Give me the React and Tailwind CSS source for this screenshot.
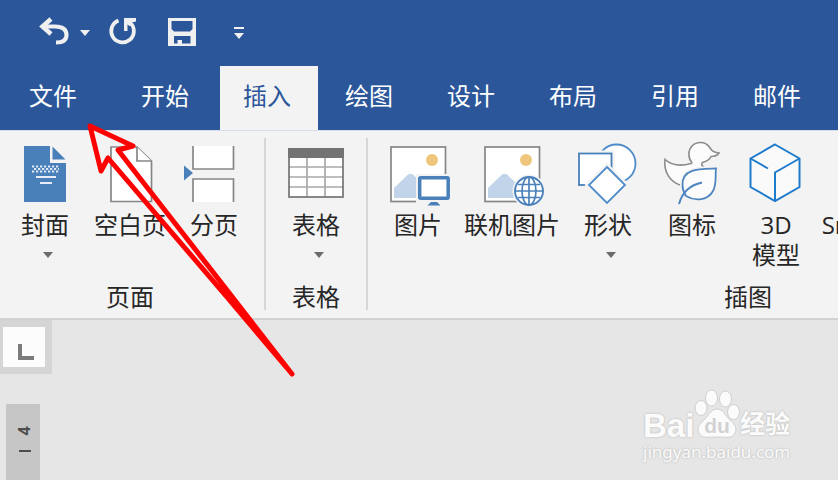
import { useState } from 'react'

const TABS = ['文件', '开始', '插入', '绘图', '设计', '布局', '引用', '邮件']

function Glyph({ children }) {
  return (
    <svg width="64" height="72" viewBox="0 0 64 72" fill="none" className="overflow-visible shrink-0" aria-hidden="true">
      {children}
    </svg>
  )
}

function CoverPageIcon() {
  return (
    <Glyph>
      <path d="M11 8H37V25H53V64H11Z" fill="#4a80ba" />
      <path d="M39.5 8.5L52.5 21.5H39.5Z" fill="#4a80ba" />
      <path d="M19 28.500H46M21 31H46M19 33.500H46" stroke="#dfe8f3" strokeWidth="2.200" strokeDasharray="2.200 1.800" />
      <path d="M23 39H43M27 45H39" stroke="#e6edf6" strokeWidth="2" />
    </Glyph>
  )
}

function BlankPageIcon() {
  return (
    <Glyph>
      <path d="M13 9H39L53.5 23V63.5H13Z" fill="#fff" stroke="#868686" strokeWidth="1.7" />
      <path d="M39 9V23H53.5" fill="#fff" stroke="#868686" strokeWidth="1.7" />
    </Glyph>
  )
}

function PageBreakIcon() {
  return (
    <Glyph>
      <path d="M11 8V31H51.5V8M11 64V41H51.5V64" fill="#fff" stroke="#868686" strokeWidth="1.7" />
      <path d="M2 27.5L11 35L2 42.5Z" fill="#4a80ba" />
    </Glyph>
  )
}

function TableIcon() {
  return (
    <Glyph>
      <rect x="5" y="11" width="54" height="48" fill="#fff" />
      <path d="M23 19V59M41 19V59M5 29H59M5 39H59M5 49H59" stroke="#a9a9a9" strokeWidth="1.7" />
      <rect x="5" y="11" width="54" height="48" stroke="#737373" strokeWidth="1.7" />
      <path d="M4 10H60V20H4Z" fill="#737373" />
    </Glyph>
  )
}

function PhotoFrame({ mountain }) {
  return (
    <>
      <rect x="5" y="9" width="54.5" height="54.5" fill="#fff" stroke="#868686" strokeWidth="1.7" />
      <circle cx="46" cy="22" r="6" fill="#eec67e" />
      <path d={mountain} fill="#c1d4e9" />
    </>
  )
}

function PictureIcon() {
  return (
    <Glyph>
      <PhotoFrame mountain="M8 50L22 36.500Q24.500 35 27 36.500L31 40.500V60H8Z" />
      <path d="M30 36H66V70H30Z" fill="#f3f3f3" />
      <rect x="33.700" y="39.700" width="28.500" height="20.500" rx="1" fill="#fff" stroke="#4a80ba" strokeWidth="3.5" />
      <path d="M45 64H51L54.500 67.500H41.500Z" fill="#4a80ba" />
    </Glyph>
  )
}

function OnlinePictureIcon() {
  return (
    <Glyph>
      <PhotoFrame mountain="M8 50L22 36.500Q24.500 35 27 36.500L37 46V60H8Z" />
      <circle cx="49" cy="53" r="16.500" fill="#f3f3f3" />
      <circle cx="49" cy="53" r="14" fill="#fff" stroke="#4a80ba" strokeWidth="1.900" />
      <path d="M49 39V67M35 53H63M38 46.500H60M38 59.500H60" stroke="#4a80ba" strokeWidth="1.700" />
      <ellipse cx="49" cy="53" rx="7" ry="14" stroke="#4a80ba" strokeWidth="1.700" />
    </Glyph>
  )
}

function ShapesIcon() {
  return (
    <Glyph>
      <circle cx="40.500" cy="25.500" r="19" fill="#fff" stroke="#4f8cc9" strokeWidth="1.800" />
      <path d="M0 12.500H38.500V50H0Z" fill="#f3f3f3" />
      <rect x="3" y="15.500" width="32.500" height="31.500" fill="#fff" stroke="#4a80ba" strokeWidth="1.800" />
      <path d="M31 24.500L53.500 47L31 69.500L8.500 47Z" fill="#f3f3f3" />
      <path d="M31 29L49 47L31 65L13 47Z" fill="#fff" stroke="#4f8cc9" strokeWidth="1.800" />
    </Glyph>
  )
}

function DuckIcon() {
  return (
    <Glyph>
      <path
        d="M20 47C10 43.500 3.500 34 5 21.500C11 27 20 28.500 31 25.500C32 25 32 24.500 31.500 24C28 20 28 12 32 8C37 3 45 3.500 49 8.500C51 11.500 52 14 59 15C57 18 53.500 18.500 51 18.500C49.500 22 46 23.500 42.500 24.500C41 26 41.500 28 44 29L40 40L20 47Z"
        fill="#fcfcfc"
      />
      <path
        d="M20 47C10 43.500 3.500 34 5 21.500C11 27 20 28.500 31 25.500C32 25 32 24.500 31.500 24C28 20 28 12 32 8C37 3 45 3.500 49 8.500C51 11.500 52 14 59 15C57 18 53.500 18.500 51 18.500C49.500 22 46 23.500 42.500 24.500C41 26 41.500 28 44 29"
        stroke="#8b8b8b"
        strokeWidth="1.600"
      />
      <path d="M56 30.500C40 31 22 30 22.500 47C22.500 52 24 55 26 58C36 64 48 62 53 53C57 46 55 38 56 30.500Z" fill="#fcfcfc" stroke="#f3f3f3" strokeWidth="5" />
      <path d="M56 30.500C40 31 22 30 22.500 47C22.500 52 24 55 26 58C36 64 48 62 53 53C57 46 55 38 56 30.500Z" fill="#fcfcfc" stroke="#4f86c0" strokeWidth="1.800" />
      <path d="M19 66C22 55 30 47 42 44.500" stroke="#4f86c0" strokeWidth="2" />
    </Glyph>
  )
}

function CubeIcon() {
  return (
    <Glyph>
      <path d="M31 6.500L55.500 20.500V49L31 63L6.500 49V20.500Z" fill="#fafafa" stroke="#1e7acb" strokeWidth="2" />
      <path d="M55.500 20.500L31 34.500V63M6.500 20.500L24 30.500" stroke="#1e7acb" strokeWidth="2" />
    </Glyph>
  )
}

function Caret({ className = '' }) {
  return (
    <svg width="10" height="6" viewBox="0 0 10 6" className={className} aria-hidden="true">
      <path d="M0 0H10L5 6Z" fill="currentColor" />
    </svg>
  )
}

const GROUPS = [
  {
    name: '页面',
    width: 'w-[260px]',
    row: 'pl-1.5 gap-1',
    items: [
      { label: '封面', icon: <CoverPageIcon />, width: 'w-[78px]', menu: true },
      { label: '空白页', icon: <BlankPageIcon />, width: 'w-[84px]' },
      { label: '分页', icon: <PageBreakIcon />, width: 'w-[76px]' },
    ],
  },
  {
    name: '表格',
    width: 'w-[92px]',
    row: '',
    items: [{ label: '表格', icon: <TableIcon />, width: 'w-[92px]', menu: true }],
  },
  {
    name: '插图',
    width: 'w-[752px]',
    row: 'pl-3 gap-2',
    items: [
      { label: '图片', icon: <PictureIcon />, width: 'w-[68px]' },
      { label: '联机图片', icon: <OnlinePictureIcon />, width: 'w-[104px]' },
      { label: '形状', icon: <ShapesIcon />, width: 'w-[72px]', menu: true },
      { label: '图标', icon: <DuckIcon />, width: 'w-[80px]' },
      { label: '3D 模型', icon: <CubeIcon />, width: 'w-[72px]', wrap: true },
      { label: 'SmartArt', icon: <Glyph />, width: 'w-[104px]' },
    ],
  },
]

function RibbonButton({ item }) {
  return (
    <button className={`flex flex-col items-center shrink-0 ${item.width}`}>
      {item.icon}
      <span className={`leading-[30px] ${item.wrap ? 'w-12' : 'whitespace-nowrap'}`}>{item.label}</span>
      {item.menu && <Caret className="mt-3 ml-1.5 text-[#6b6b6b]" />}
    </button>
  )
}

function QuickAccess() {
  return (
    <div className="flex items-center h-[66px] pl-[38px] text-[#f0f0f0]">
      <button aria-label="撤消">
        <svg width="32" height="32" viewBox="0 0 32 32" fill="none" stroke="currentColor" aria-hidden="true">
          <path d="M13 2L4.500 9.500L13 17" strokeWidth="4.500" />
          <path d="M5 9.500H17C25 9.500 28.500 13 28.500 18C28.500 23 25 25.500 18 25.500" strokeWidth="4" />
        </svg>
      </button>
      <button aria-label="撤消选项" className="ml-2.5">
        <Caret />
      </button>
      <button aria-label="重复" className="ml-4">
        <svg width="32" height="32" viewBox="0 0 32 32" fill="none" stroke="currentColor" aria-hidden="true">
          <path d="M12.500 3.500A11.300 11.300 0 1 0 24.500 6" strokeWidth="3.800" />
          <path d="M18 1H30V4.500L25.500 5.500L27 8L23.500 9L21.500 7.500V14H18Z" fill="currentColor" stroke="none" />
        </svg>
      </button>
      <button aria-label="保存" className="ml-7">
        <svg width="32" height="32" viewBox="0 0 32 32" aria-hidden="true">
          <path
            fillRule="evenodd"
            d="M2 1H30V29H2ZM5.500 4V12L8 14.500H24L26.500 12V4ZM8 19V26.500H11.500V23H16V26.500H24.500V19Z"
            fill="currentColor"
          />
        </svg>
      </button>
      <button aria-label="自定义快速访问工具栏" className="ml-9 flex flex-col items-center gap-1">
        <span className="w-2.5 h-0.5 bg-current" />
        <Caret />
      </button>
    </div>
  )
}

function Watermark() {
  return (
    <div className="absolute right-11 bottom-4 w-[151px] text-[#fbfbfb] [text-shadow:0_0_2px_#c4c4c4,0_0_2px_#c4c4c4]">
      <div className="flex items-end">
        <span className="font-['Liberation_Sans',sans-serif] font-bold text-[33px] leading-7">Bai</span>
        <svg width="46" height="52" viewBox="0 0 46 52" className="[text-shadow:none]" aria-hidden="true">
          <g fill="#fbfbfb" stroke="#cfcfcf" strokeWidth="1">
            <ellipse cx="7" cy="20" rx="6" ry="7.500" />
            <ellipse cx="17.500" cy="10" rx="6" ry="8" />
            <ellipse cx="31.500" cy="11" rx="6" ry="8" />
            <ellipse cx="39.500" cy="24" rx="6" ry="7.500" />
            <path d="M23 21C29 21 31 27 36 32C42 37 43 42 41 45C38 51 32 49 23 49C14 49 8 51 5 45C3 41 4 37 10 32C15 27 17 21 23 21Z" />
          </g>
          <text x="23" y="45" textAnchor="middle" fontSize="21" fontWeight="700" fontFamily="Liberation Sans, sans-serif" fill="#d2d2d2">
            du
          </text>
        </svg>
        <span className="font-['Noto_Sans_CJK_SC',sans-serif] font-bold text-[25px] leading-9">经验</span>
      </div>
      <p className="font-['Noto_Sans',sans-serif] text-[17px] leading-6">jingyan.baidu.com</p>
    </div>
  )
}

export default function App() {
  const [active, setActive] = useState('插入')

  return (
    <div className="relative flex flex-col h-screen overflow-hidden bg-[#e6e6e6] text-[#262626] text-2xl font-['Open_Sans','Noto_Sans_CJK_SC',sans-serif]">
      <header className="bg-[#2b579a] shrink-0">
        <QuickAccess />
        <nav className="flex gap-1 pl-1.5 h-16">
          {TABS.map((tab, i) => (
            <button
              key={tab}
              onClick={() => setActive(tab)}
              className={`w-[98px] shrink-0 pr-1 pb-1 ${i === 0 ? 'mr-2.5' : ''} ${
                tab === active ? 'bg-[#f3f3f3] text-[#2b579a]' : 'text-white'
              }`}
            >
              {tab}
            </button>
          ))}
        </nav>
      </header>

      <section className="flex shrink-0 overflow-hidden bg-[#f3f3f3] border-t border-t-[#d5dcea] border-b-2 border-b-[#d2d2d2] pt-[7px] pb-1.5">
        {GROUPS.map((group, i) => (
          <div key={group.name} className="flex shrink-0">
            {i > 0 && <div className="w-0.5 mx-1 mb-0.5 bg-[#d6d6d6]" />}
            <div className={`flex flex-col ${group.width}`}>
              <div className={`flex h-36 ${group.row}`}>
                {group.items.map(item => (
                  <RibbonButton key={item.label} item={item} />
                ))}
              </div>
              <p className="text-center leading-[30px]">{group.name}</p>
            </div>
          </div>
        ))}
      </section>

      <main className="relative flex flex-col flex-1 min-h-0">
        <button aria-label="制表符" className="w-[52px] h-[54px] shrink-0 bg-[#d5d5d5] pl-[3px] pr-[7px] py-[7px]">
          <span className="flex items-end h-10 bg-[#fcfcfc] pl-[15px] pb-[7px]">
            <span className="w-4 h-4 border-l-4 border-b-4 border-[#7b7b7b]" />
          </span>
        </button>
        <div className="flex flex-col items-center flex-1 w-[34px] ml-1.5 mt-[30px] pt-[18px] bg-[#c6c6c6] text-[#4d4d4d]">
          <span className="-rotate-90 font-bold text-base leading-[18px] ml-0.5">4</span>
          <span className="w-3 h-0.5 mt-2.5 ml-1 bg-[#4d4d4d]" />
        </div>
        <Watermark />
      </main>

      <svg width="300" height="380" viewBox="0 0 300 380" className="absolute left-0 top-0 pointer-events-none" aria-hidden="true">
        <path
          d="M90 126L133 146L118 150L230 294L292 374L226 296L108 158L101 171Z"
          fill="none"
          stroke="#fe0000"
          strokeWidth="5"
          strokeLinejoin="round"
        />
      </svg>
    </div>
  )
}
